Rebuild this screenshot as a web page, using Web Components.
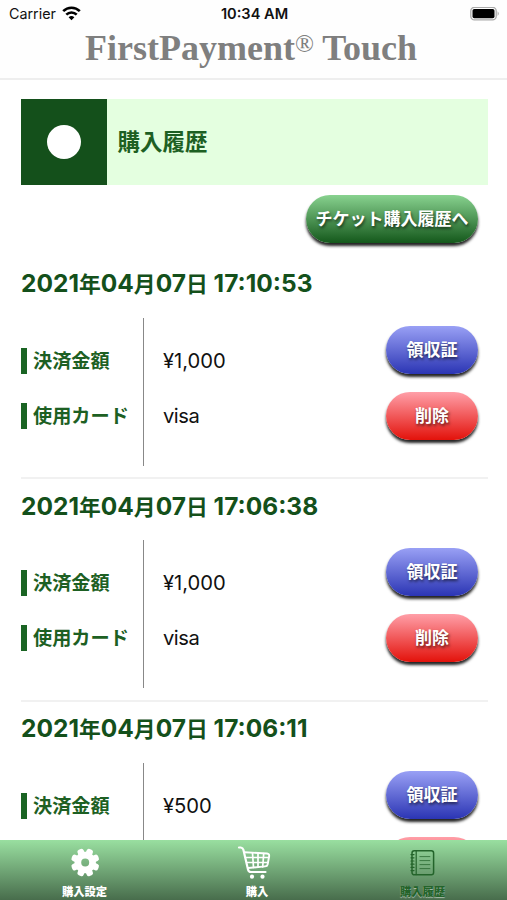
<!DOCTYPE html>
<html lang="ja">
<head>
<meta charset="utf-8">
<meta name="viewport" content="width=device-width">
<title>購入履歴</title>
<style>
html, body {
  margin: 0;
  height: 100%;
  overflow: hidden;
}

body {
  --green: #14501b;
  background: #fff;
  font-family: Inter, "Noto Sans CJK JP", sans-serif;
}
</style>
</head>
<body>
<pay-app>
  <status-bar slot="top" carrier="Carrier" time="10:34 AM"></status-bar>
  <app-title slot="top">FirstPayment<span>®</span> Touch</app-title>

  <page-banner>購入履歴</page-banner>
  <pill-button class="ticket" kind="green">チケット購入履歴へ</pill-button>
  <purchase-entry date="2021年04月07日 17:10:53" amount="¥1,000" card="visa"></purchase-entry>
  <purchase-entry date="2021年04月07日 17:06:38" amount="¥1,000" card="visa"></purchase-entry>
  <purchase-entry date="2021年04月07日 17:06:11" amount="¥500" card="visa"></purchase-entry>

  <tab-bar slot="bottom">
    <tab-item icon="gear">購入設定</tab-item>
    <tab-item icon="cart">購入</tab-item>
    <tab-item icon="notebook" active>購入履歴</tab-item>
  </tab-bar>
</pay-app>

<script>
class PayApp extends HTMLElement {
  constructor() {
    super();
    this.attachShadow({ mode: "open" }).innerHTML = `
<style>
:host {
  display: flex;
  flex-direction: column;
  height: 100vh;
}

main {
  flex: 1;
  min-height: 0;
  overflow: hidden;
  display: flex;
  flex-direction: column;
  padding: 19px 19px 0 21px;
}

::slotted(.ticket) {
  align-self: flex-end;
  width: 172px;
  margin: 10px 10px 14.1px 0;
}
</style>
<slot name="top"></slot>
<main><slot></slot></main>
<slot name="bottom"></slot>
    `;
  }
}

class StatusBar extends HTMLElement {
  connectedCallback() {
    this.attachShadow({ mode: "open" }).innerHTML = `
<style>
:host {
  display: grid;
  grid-template-columns: 1fr auto 1fr;
  align-items: center;
  height: 28px;
  padding: 0 7px 0 9px;
  font-size: 14.3px;
  color: #111;
  background: #fefefe;
}

.carrier {
  display: flex;
  align-items: center;
  gap: 6px;
}

.carrier, .time {
  margin-top: -1px;
}

.time {
  font-size: 14.6px;
  font-weight: 600;
}

.battery {
  justify-self: end;
}

svg {
  display: block;
}
</style>
<div class="carrier">
  <span>${this.getAttribute("carrier")}</span>
  <svg width="19" height="15" viewBox="0 0 19 15" fill="none" stroke="#000" stroke-width="2.6">
    <path d="M1.2 5.2a11.8 11.8 0 0 1 16.6 0"/>
    <path d="M4.3 8.6a7.4 7.4 0 0 1 10.4 0"/>
    <path d="M9.500 14.300l-2.900-3a4.200 4.200 0 0 1 5.800 0z" fill="#000" stroke="none"/>
  </svg>
</div>
<div class="time">${this.getAttribute("time")}</div>
<svg class="battery" width="30" height="15" viewBox="0 0 30 15">
  <rect x=".8" y=".3" width="25.400" height="12.600" rx="3.600" fill="#fff" stroke="#aaa" stroke-width="1.300"/>
  <rect x="2.500" y="2" width="22" height="9.200" rx="1.800" fill="#000"/>
  <path d="M27.600 4.300q2.400 2.300 0 4.600z" fill="#aaa"/>
</svg>
    `;
  }
}

class AppTitle extends HTMLElement {
  constructor() {
    super();
    this.attachShadow({ mode: "open" }).innerHTML = `
<style>
:host {
  display: block;
  box-sizing: border-box;
  height: 52px;
  padding-right: 5px;
  border-bottom: 2px solid #eee;
  background: #fefefe;
  color: #7f7f7f;
  font: bold 36px/40px "Liberation Serif", serif;
  text-align: center;
  white-space: nowrap;
}

::slotted(span) {
  font-size: 25px;
  font-weight: 400;
  line-height: 0;
  vertical-align: 8px;
}
</style>
<slot></slot>
    `;
  }
}

class PageBanner extends HTMLElement {
  constructor() {
    super();
    this.attachShadow({ mode: "open" }).innerHTML = `
<style>
:host {
  display: flex;
  align-items: center;
  flex: none;
  height: 86px;
  background: #e4ffe0;
}

.mark {
  display: grid;
  place-items: center;
  width: 86px;
  height: 100%;
  background: var(--green);
}

.mark::before {
  content: "";
  width: 34px;
  height: 34px;
  border-radius: 50%;
  background: #fff;
}

h1 {
  margin: 0 0 0 10.5px;
  font-size: 22.5px;
  font-weight: 600;
  line-height: 30px;
  color: #1d6023;
}
</style>
<div class="mark"></div>
<h1><slot></slot></h1>
    `;
  }
}

class PillButton extends HTMLElement {
  constructor() {
    super();
    this.attachShadow({ mode: "open" }).innerHTML = `
<style>
:host {
  display: block;
  flex: none;
  height: 48px;
}

button {
  width: 100%;
  height: 100%;
  padding: 0;
  border: 0;
  border-radius: 24px;
  color: #fff;
  font: 600 17px/46px Inter, "Noto Sans CJK JP", sans-serif;
  text-shadow: 1px 2px 3px #0009;
  white-space: nowrap;
  box-shadow: 0 3px 3px #000d;
}

:host([kind="green"]) button {
  background: linear-gradient(#88d28f, #14581b);
}

:host([kind="blue"]) button {
  background: linear-gradient(#99a0f5, #2b35b4);
}

:host([kind="red"]) button {
  background: linear-gradient(#ff9fa8, #e3120b);
}
</style>
<button><slot></slot></button>
    `;
  }
}

class PurchaseEntry extends HTMLElement {
  // kanji units are set a little smaller than the digits
  dateMarkup() {
    return this.getAttribute("date").replace(/[年月日]/g, "<span>$&</span>");
  }

  connectedCallback() {
    this.attachShadow({ mode: "open" }).innerHTML = `
<style>
:host {
  display: block;
  flex: none;
  box-sizing: border-box;
  height: 222.3px;
  border-bottom: 2px solid #f1f1f1;
}

h2 {
  margin: 0;
  height: 36px;
  padding-top: 8.4px;
  font-size: 24.5px;
  font-weight: 700;
  line-height: 36px;
  color: var(--green);
  white-space: nowrap;
}

h2 span {
  font-size: 21.8px;
  line-height: 1;
}

.detail {
  display: grid;
  grid-template-columns: 123px 1fr 92px;
  height: 148px;
  margin-top: 16.6px;
  padding-right: 10px;
}

.labels, .values, .actions {
  display: flex;
  flex-direction: column;
}

.labels, .values {
  gap: 29px;
  margin: 0;
  padding-top: 30px;
  line-height: 26px;
}

.labels {
  border-right: 1px solid #888;
}

.labels div {
  padding-left: 6px;
  border-left: 6px solid #1a6423;
  color: #1d6023;
  font-size: 19.2px;
  font-weight: 600;
  white-space: nowrap;
}

.values div {
  margin-left: 19px;
  font-size: 20.2px;
  color: #111;
}

.values div:last-child {
  letter-spacing: -0.5px;
}

.actions {
  gap: 18px;
  padding-top: 8px;
}
</style>
<h2>${this.dateMarkup()}</h2>
<div class="detail">
  <div class="labels"><div>決済金額</div><div>使用カード</div></div>
  <div class="values"><div>${this.getAttribute("amount")}</div><div>${this.getAttribute("card")}</div></div>
  <div class="actions">
    <pill-button kind="blue">領収証</pill-button>
    <pill-button kind="red">削除</pill-button>
  </div>
</div>
    `;
  }
}

class TabBar extends HTMLElement {
  constructor() {
    super();
    this.attachShadow({ mode: "open" }).innerHTML = `
<style>
:host {
  display: grid;
  grid-template-columns: repeat(3, 1fr);
  flex: none;
  height: 60px;
  background: linear-gradient(#99dfa0, #486d4c);
}
</style>
<slot></slot>
    `;
  }
}

class TabItem extends HTMLElement {
  icons = {
    gear: `
<g fill="#fff" transform="translate(1.200 .5)">
  <path fill-rule="evenodd" d="M16 5.300a10.700 10.700 0 1 0 0 21.400a10.700 10.700 0 1 0 0-21.400zM16 12a4 4 0 1 1 0 8a4 4 0 1 1 0-8z"/>
  ${[22.5, 67.5, 112.5, 157.5, 202.5, 247.5, 292.5, 337.5].map(a =>
    `<rect x="12.700" y="1.700" width="6.600" height="7" rx="2.300" transform="rotate(${a} 16 16)"/>`).join("")}
</g>`,
    cart: `
<g transform="translate(1 0)">
<g fill="none" stroke="#fff" stroke-linecap="round" stroke-linejoin="round">
  <path stroke-width="2.200" d="M1 1.500h1.800q2 .2 2.600 2.200L10 23.500q.6 2.500 3 2.500h14.500"/>
  <path stroke-width="1.900" d="M6.500 6.300l22.500 1.200q2.600.2 2.100 3l-1.500 8q-.4 1.800-2.500 1.900L10 22"/>
  <path stroke-width="1.700" d="M7.500 11.500h23M9 16.500h20.800M14.500 7l1 14.500M20 7v14M25.700 7.500l-1 13.500"/>
</g>
<circle cx="14" cy="30.700" r="2.100" fill="#fff"/>
<circle cx="24.500" cy="30.700" r="2.100" fill="#fff"/>
</g>`,
    notebook: `
<g fill="none" stroke="#24642b" stroke-width="1.500" stroke-linecap="round" transform="translate(.4 .6)">
  <rect x="5.600" y="4.200" width="21.600" height="24" rx="2.300"/>
  <path d="M9.800 4.500v23.500" stroke-width="1.200"/>
  <path d="M13.500 10h10M13.500 14h10M13.500 18h10M13.500 22h10" stroke-width="1" opacity=".75"/>
  <path d="M4.600 8h3M4.600 11.200h3M4.600 14.400h3M4.600 17.600h3M4.600 20.800h3M4.600 24h3" stroke-width="1.200"/>
</g>`
  };

  connectedCallback() {
    this.attachShadow({ mode: "open" }).innerHTML = `
<style>
:host {
  display: flex;
  flex-direction: column;
  align-items: center;
  padding-top: 6px;
  color: #fff;
  font-size: 11.3px;
  font-weight: 900;
  line-height: 14px;
}

:host([active]) {
  color: #24642b;
  text-shadow: 0 1px 1px #fff8;
}

:host([icon="cart"]) span {
  margin-left: 7px;
}

svg {
  display: block;
  height: 34px;
  margin-bottom: 5px;
}
</style>
<svg width="34" height="34" viewBox="0 0 34 34">${this.icons[this.getAttribute("icon")]}</svg>
<span><slot></slot></span>
    `;
  }
}

customElements.define("pay-app", PayApp);
customElements.define("status-bar", StatusBar);
customElements.define("app-title", AppTitle);
customElements.define("page-banner", PageBanner);
customElements.define("pill-button", PillButton);
customElements.define("purchase-entry", PurchaseEntry);
customElements.define("tab-bar", TabBar);
customElements.define("tab-item", TabItem);
</script>
</body>
</html>
